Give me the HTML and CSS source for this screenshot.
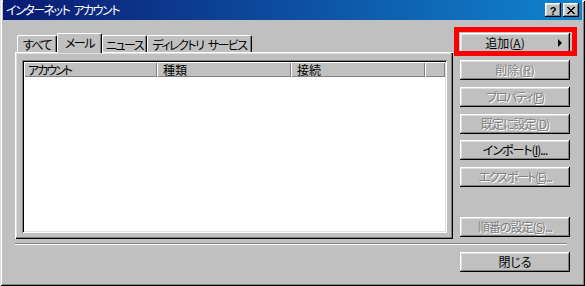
FILE: index.html
```html
<!DOCTYPE html>
<html lang="ja">
<head>
<meta charset="utf-8">
<link rel="stylesheet" href="styles.css">
</head>
<body>
<div class="window">
  <div class="titlebar">
    <span class="title">インターネット アカウント</span>
    <div class="caption-btns">
      <span class="cap-btn help">?</span>
      <span class="cap-btn close">
        <svg width="8" height="7" viewBox="0 0 8 7" shape-rendering="crispEdges">
          <path d="M0 0h2v1h-2zM6 0h2v1h-2zM1 1h2v1h-2zM5 1h2v1h-2zM2 2h4v1h-4zM3 3h2v1h-2zM2 4h4v1h-4zM1 5h2v1h-2zM5 5h2v1h-2zM0 6h2v1h-2zM6 6h2v1h-2z" fill="#000"/>
        </svg>
      </span>
    </div>
  </div>
  <div class="content">
    <div class="main">
      <div class="tabs-area">
        <div class="tabs">
          <div class="tab t1">すべて</div>
          <div class="tab t2 selected">メール</div>
          <div class="tab t3">ニュース</div>
          <div class="tab t4">ディレクトリ サービス</div>
        </div>
        <div class="panel">
          <div class="list">
            <div class="header">
              <div class="hcell c1">アカウント</div>
              <div class="hcell c2">種類</div>
              <div class="hcell c3">接続</div>
              <div class="hcell c4"></div>
            </div>
          </div>
        </div>
      </div>
      <div class="buttons">
        <button class="btn add"><span class="label">追加(<u>A</u>)</span><span class="arrow"></span></button>
        <button class="btn disabled">削除(<u>R</u>)</button>
        <button class="btn disabled kana">プロパティ(<u>P</u>)</button>
        <button class="btn disabled mixed">既定に設定(<u>D</u>)</button>
        <button class="btn import mixed">インポート(<u>I</u>)...</button>
        <button class="btn disabled kana-mid">エクスポート(<u>E</u>)...</button>
        <button class="btn disabled order mixed">順番の設定(<u>S</u>)...</button>
      </div>
    </div>
    <div class="sep"></div>
    <div class="footer">
      <button class="btn">閉じる</button>
    </div>
  </div>
  <div class="highlight"></div>
</div>
</body>
</html>
```
FILE: styles.css
```css
html, body {
  margin: 0;
  padding: 0;
  background: #c0c0c0;
}
body {
  font-family: "Noto Sans CJK JP", "Noto Sans", sans-serif;
  font-size: 12px;
  font-feature-settings: "palt";
  color: #000;
}
.window {
  position: relative;
  width: 585px;
  height: 286px;
  box-sizing: border-box;
  padding: 0 3px 2px 3px;
  background: #c0c0c0;
  box-shadow: inset 1px 1px #dfdfdf, inset -1px -1px #000, inset 2px 2px #fff, inset -2px -2px #808080;
  display: flex;
  flex-direction: column;
}
.titlebar {
  height: 20px;
  flex: none;
  background: linear-gradient(to right, #0a1a72, #1084d0);
  color: #fff;
  display: flex;
  align-items: center;
  justify-content: space-between;
  padding: 0 3px 0 3px;
}
.title {
  font-size: 12px;
  line-height: 14px;
  letter-spacing: -1.5px;
  word-spacing: 3px;
  white-space: nowrap;
}
.caption-btns {
  display: flex;
  gap: 2px;
}
.cap-btn {
  width: 16px;
  height: 14px;
  box-sizing: border-box;
  background: #c0c0c0;
  box-shadow: inset -1px -1px #000, inset 1px 1px #fff, inset -2px -2px #808080, inset 2px 2px #dfdfdf;
  display: flex;
  align-items: center;
  justify-content: center;
  color: #000;
}
.help {
  font-family: "Liberation Sans", Arial, sans-serif;
  font-weight: bold;
  font-size: 11px;
  line-height: 12px;
  padding-top: 1px;
}
.close svg {
  display: block;
  margin-left: -1px;
}
.content {
  flex: 1;
  display: flex;
  flex-direction: column;
  padding: 13px 12px 0 12px;
}
.main {
  display: flex;
  gap: 7px;
  height: 206px;
}
.tabs-area {
  width: 438px;
  display: flex;
  flex-direction: column;
}
.tabs {
  height: 19px;
  display: flex;
  align-items: flex-end;
  padding-left: 2px;
  position: relative;
  z-index: 1;
}
.tab {
  flex: none;
  height: 17px;
  box-sizing: border-box;
  background: #c0c0c0;
  border-top: 1px solid #fff;
  border-left: 1px solid #fff;
  border-right: 1px solid #000;
  border-radius: 2px 2px 0 0;
  box-shadow: inset -1px 0 #808080;
  display: flex;
  align-items: center;
  justify-content: center;
  line-height: 14px;
  padding-top: 2px;
  letter-spacing: -1.5px;
  word-spacing: 3px;
  white-space: nowrap;
}
.t1 { width: 40px; }
.t2 { width: 45px; }
.t3 { width: 45px; }
.t4 { width: 105px; }
.tab.selected {
  height: 20px;
  margin-bottom: -1px;
  padding-top: 0;
  padding-bottom: 2px;
}
.panel {
  width: 438px;
  height: 187px;
  box-sizing: border-box;
  padding: 8px 6px 6px 7px;
  box-shadow: inset 1px 1px #fff, inset -1px -1px #000, inset -2px -2px #808080, inset 2px 2px #dfdfdf;
}
.list {
  width: 425px;
  height: 173px;
  box-sizing: border-box;
  background: #fff;
  padding: 2px;
  box-shadow: inset 1px 1px #808080, inset -1px -1px #fff, inset 2px 2px #000, inset -2px -2px #dfdfdf;
}
.header {
  display: flex;
  height: 15px;
}
.hcell {
  box-sizing: border-box;
  height: 15px;
  background: #c0c0c0;
  box-shadow: inset 1px 1px #fff, inset -1px -1px #808080;
  padding-left: 4px;
  line-height: 15px;
  white-space: nowrap;
}
.c1 { width: 133px; letter-spacing: -2px; }
.c2 { width: 134px; padding-left: 6px; }
.c3 { width: 134px; padding-left: 6px; }
.c4 { flex: 1; }
.buttons {
  width: 110px;
  display: flex;
  flex-direction: column;
  gap: 7px;
  padding-bottom: 2px;
}
.btn {
  width: 110px;
  height: 20px;
  flex: none;
  box-sizing: border-box;
  border: 0;
  margin: 0;
  padding: 0;
  background: #c0c0c0;
  box-shadow: inset -1px -1px #000, inset 1px 1px #fff, inset -2px -2px #808080, inset 2px 2px #dfdfdf;
  font-family: "Noto Sans CJK JP", "Noto Sans", sans-serif;
  font-size: 12px;
  font-feature-settings: "palt";
  line-height: 14px;
  color: #000;
  display: flex;
  align-items: center;
  justify-content: center;
  white-space: nowrap;
}
.btn.mixed { letter-spacing: -1px; }
.btn.kana-mid { letter-spacing: -1.5px; }
.btn.kana { letter-spacing: -1.5px; }
.btn u {
  text-underline-offset: 1px;
}
.btn.disabled {
  color: #808080;
  text-shadow: 1px 1px 0 #fff;
}
.btn.import {
  margin-top: -1px;
}
.btn.order {
  margin-top: auto;
}
.btn.add {
  position: relative;
  padding-right: 20px;
}
.arrow {
  position: absolute;
  right: 8px;
  top: 6px;
  width: 0;
  height: 0;
  border-top: 4px solid transparent;
  border-bottom: 4px solid transparent;
  border-left: 4px solid #000;
}
.sep {
  margin-top: 4px;
  margin-right: 3px;
  height: 2px;
  box-sizing: border-box;
  border-top: 1px solid #808080;
  border-bottom: 1px solid #fff;
}
.footer {
  margin-top: 7px;
  display: flex;
  justify-content: flex-end;
}
.highlight {
  position: absolute;
  left: 454px;
  top: 27px;
  width: 123px;
  height: 29px;
  box-sizing: border-box;
  border: 5px solid #ff0000;
  pointer-events: none;
}
```
